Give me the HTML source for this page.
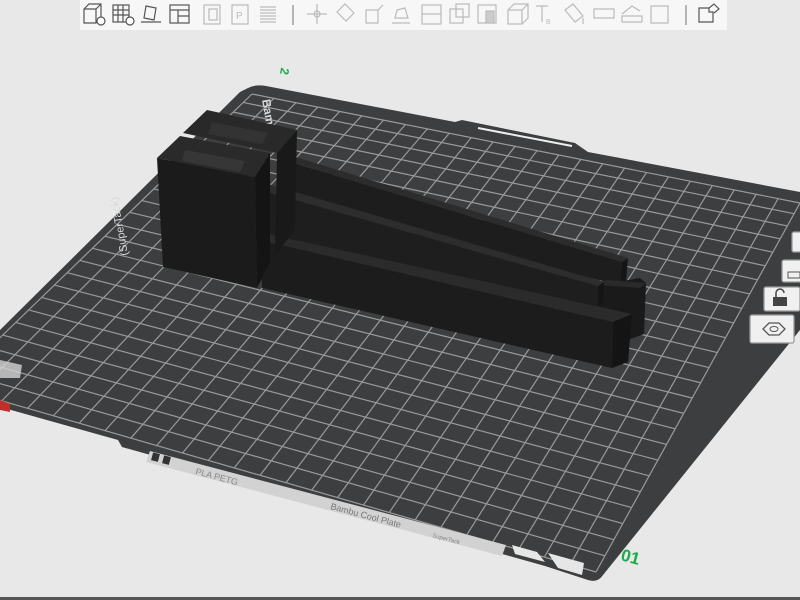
<!DOCTYPE html>
<html><head><meta charset="utf-8"><style>
html,body{margin:0;padding:0;width:800px;height:600px;overflow:hidden;background:#e8e8e8;font-family:"Liberation Sans",sans-serif}
svg{position:absolute;left:0;top:0}
</style></head><body>
<svg id="s" width="800" height="600" viewBox="0 0 800 600">
<rect width="800" height="600" fill="#e8e8e8"/>
<path d="M248,88 Q256,84 266,86 L455,122 L462,120 L575,143 L588,152 L800,192 L800,330 L603,575 Q598,583 588,580 L545,566 L122,447 L118,440 L-60,390 L0,330 L240,92 Z" fill="#3c3e3f"/>
<g id="grid" stroke="#a4a4a4" stroke-width="1.2" opacity="0.9"></g>
<path d="M150,451 L506,545 L502,556 L146,462 Z" fill="#d2d2d2"/>
<rect x="152" y="453" width="7" height="8" fill="#333" transform="rotate(15 155 457)"/>
<rect x="163" y="456" width="7" height="8" fill="#333" transform="rotate(15 166 460)"/>
<text x="195" y="474" font-size="9" fill="#888" transform="rotate(15 195 474)">PLA PETG</text>
<text x="330" y="509" font-size="9" fill="#777" transform="rotate(15 330 509)">Bambu Cool Plate</text>
<text x="432" y="537" font-size="6" fill="#888" transform="rotate(15 432 537)">SuperTack</text>
<path d="M512,545 L537,552 L545,562 L515,554 Z" fill="#e6e6e6"/>
<path d="M548,553 L584,563 L582,575 L558,568 Z" fill="#e6e6e6"/>
<path d="M478,128 L572,146" stroke="#eee" stroke-width="2"/>
<path d="M0,400 L10,404 L10,412 L0,410Z" fill="#c0302a"/>
<path d="M0,360 L22,365 L20,378 L0,378Z" fill="#d4d4d4" opacity=".8"/>
<text x="262" y="100" font-size="12" font-weight="bold" fill="#d8d8d8" transform="rotate(80 262 100)">Bam</text>
<text x="128" y="255" font-size="11" fill="#d8d8d8" transform="rotate(-100 128 255)">(SuperTack)</text>
<g>
<path d="M284,160 L622,262 L620,285 L286,205 Z" fill="#1d1d1d"/>
<path d="M284,160 L292,156 L628,258 L622,262 Z" fill="#2c2c2c"/>
<path d="M622,262 L628,258 L626,282 L620,285 Z" fill="#161616"/>
<path d="M600,285 L640,278 L646,283 L644,334 L628,340 L600,320 Z" fill="#1a1a1a"/>
<path d="M600,285 L606,280 L646,283 L640,288 Z" fill="#2a2a2a"/>
<path d="M260,190 L598,286 L598,308 L262,238 Z" fill="#1e1e1e"/>
<path d="M260,190 L268,184 L604,282 L598,286 Z" fill="#2d2d2d"/>
<path d="M598,286 L604,282 L603,303 L598,308 Z" fill="#151515"/>
<path d="M260,240 L613,322 L612,368 L262,288 Z" fill="#1c1c1c"/>
<path d="M260,240 L268,234 L632,314 L613,322 Z" fill="#2b2b2b"/>
<path d="M613,322 L632,314 L628,362 L612,368 Z" fill="#141414"/>
<path d="M183,133 L207,110 L297,130 L277,153 Z" fill="#292929"/>
<path d="M212,122 L268,133 L262,144 L208,134 Z" fill="#333"/>
<path d="M277,153 L297,130 L295,230 L275,255 Z" fill="#191919"/>
<path d="M157,158 L180,136 L270,153 L255,177 Z" fill="#2a2a2a"/>
<path d="M185,150 L245,161 L240,172 L182,161 Z" fill="#363636"/>
<path d="M157,158 L255,177 L257,288 L163,267 Z" fill="#1b1b1b"/>
<path d="M255,177 L270,153 L270,262 L257,288 Z" fill="#141414"/>
</g>
<text x="620" y="560" font-size="17" font-weight="bold" fill="#1aaa4a" transform="rotate(15 620 560)">01</text>
<text x="278" y="78" font-size="12" font-weight="bold" fill="#1aaa4a" transform="rotate(100 284 74)">2</text>
<g fill="#f0f0f0" stroke="#9a9a9a" stroke-width="1.3">
<rect x="792" y="232" width="14" height="20" rx="2"/>
<rect x="782" y="260" width="22" height="22" rx="2"/>
<rect x="764" y="287" width="36" height="24" rx="2"/>
<rect x="750" y="315" width="44" height="28" rx="2"/>
</g>
<path d="M788,272 h12 v6 h-12z" fill="none" stroke="#555"/>
<rect x="773" y="297" width="14" height="9" fill="#444"/>
<path d="M776,297 v-4 a4 4 0 0 1 8 0" fill="none" stroke="#444" stroke-width="1.5"/>
<path d="M763,329 l6,-6 h10 l6,6 l-6,6 h-10z" fill="none" stroke="#555" stroke-width="1.3"/>
<ellipse cx="774" cy="329" rx="4" ry="2.5" fill="none" stroke="#555"/>
<rect x="80" y="0" width="647" height="30" fill="#f7f7f7"/>
<g fill="none" stroke="#555" stroke-width="1.2">
<path d="M84,9 l5,-5 h12 v14 l-5,5 h-12z M84,9 h12 v14 M96,9 l5,-5"/><circle cx="101" cy="21" r="4" fill="#fff"/>
<rect x="113" y="5" width="16" height="17"/><path d="M113,10 h16 M113,15 h16 M118,5 v17 M123,5 v17"/><circle cx="130" cy="21" r="4" fill="#fff"/>
<path d="M146,6 l10,2 l-2,12 l-10,-2z M141,22 h20"/>
<rect x="170" y="5" width="19" height="18"/><path d="M170,10 h19 M178,10 v13 M178,16 h11"/>
</g>
<g fill="none" stroke="#bbb" stroke-width="1.2">
<rect x="204" y="5" width="16" height="19"/><rect x="209" y="9" width="8" height="11"/>
<rect x="232" y="5" width="16" height="19"/><text x="236" y="19" font-size="10" fill="#bbb" stroke="none">P</text>
<path d="M260,7 h16 M260,10 h16 M260,13 h16 M260,16 h16 M260,19 h16 M260,22 h16"/>
<path d="M293,5 v20" stroke="#888"/>
<path d="M317,4 v20 M307,14 h20"/><circle cx="317" cy="14" r="3"/>
<path d="M337,12 l8,-8 l9,9 l-8,8z"/>
<rect x="366" y="10" width="12" height="13"/><path d="M378,10 l5,-5"/>
<path d="M395,18 h13 l-3,-10 l-8,2z M392,23 h18"/>
<rect x="422" y="5" width="19" height="19"/><path d="M422,14 h19"/>
<rect x="450" y="9" width="13" height="14"/><rect x="456" y="4" width="13" height="13"/>
<rect x="478" y="5" width="18" height="18"/><rect x="486" y="11" width="8" height="12" fill="#ccc"/>
<path d="M508,10 h14 v14 h-14z M508,10 l6,-6 h14 v14 l-6,6 M522,10 l6,-6"/>
<path d="M536,6 h12 M542,6 v16"/><text x="546" y="24" font-size="7" fill="#bbb" stroke="none">B</text>
<path d="M565,10 l8,-6 l10,12 l-8,6z M583,18 v6"/>
<rect x="594" y="9" width="20" height="9"/>
<path d="M622,14 l10,-8 l8,5 M622,16 h20 v6 h-20z"/>
<rect x="651" y="6" width="17" height="17"/>
<path d="M686,5 v20" stroke="#888"/>
<path d="M699,8 h10 v4 h4 v10 h-14z M709,8 l5,-4 l5,5 l-5,4" stroke="#555"/>
</g>
<rect x="0" y="597" width="800" height="3" fill="#555"/>
</svg>
<script>
(function(){
var g=document.getElementById('grid');
var TL=[252,94],TR=[800,203],BR=[596,572],BL=[-50,386];
var N=25,M=25;
function lerp(a,b,t){return [a[0]+(b[0]-a[0])*t,a[1]+(b[1]-a[1])*t];}
var ns='http://www.w3.org/2000/svg';
function line(p,q){var l=document.createElementNS(ns,'line');l.setAttribute('x1',p[0]);l.setAttribute('y1',p[1]);l.setAttribute('x2',q[0]);l.setAttribute('y2',q[1]);g.appendChild(l);}
function pt(t){return Math.pow(t,1.1);}
for(var i=0;i<=N;i++){var t=i/N;line(lerp(TL,TR,t),lerp(BL,BR,t));}
for(var j=0;j<=M;j++){var t=pt(j/M);line(lerp(TL,BL,t),lerp(TR,BR,t));}
})();
</script>
</body></html>
